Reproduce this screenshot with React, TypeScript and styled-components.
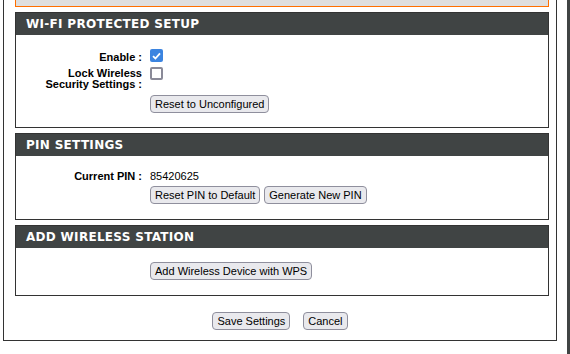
import React from "react";
import styled, { createGlobalStyle } from "styled-components";

const GlobalStyle = createGlobalStyle`
  html, body {
    margin: 0;
    padding: 0;
    background: #ffffff;
  }
  body {
    font-family: "Liberation Sans", Arial, sans-serif;
    font-size: 11px;
    color: #000000;
  }
`;

const Page = styled.div`
  display: flex;
  width: 570px;
  height: 354px;
  overflow: hidden;
`;

const Main = styled.div`
  margin-left: 3px;
  width: 554px;
  height: 341px;
  border: 1px solid #333333;
  border-top: none;
  padding: 0 9px 0 11px;
  box-sizing: border-box;
  display: flex;
  flex-direction: column;
  gap: 5px;
`;

const SideBar = styled.div`
  margin-left: auto;
  width: 3px;
  height: 100%;
  background: #404444;
`;

const Notice = styled.div`
  height: 7px;
  width: 534px;
  box-sizing: border-box;
  background: #dfdfdf;
  border: 1px solid #ff6f00;
  border-top: none;
`;

const Section = styled.div`
  width: 534px;
  box-sizing: border-box;
  border: 1px solid #333333;
`;

const SectionHeader = styled.h2`
  margin: 0;
  height: 22px;
  background: #404444;
  color: #ffffff;
  font-family: "DejaVu Sans", Verdana, sans-serif;
  font-weight: bold;
  font-size: 12px;
  letter-spacing: 0.3px;
  line-height: 22px;
  padding-left: 10px;
`;

const SectionBody = styled.div<{ $top: number; $bottom: number }>`
  padding: ${(p) => p.$top}px 0 ${(p) => p.$bottom}px;
  display: flex;
  flex-direction: column;
`;

const Row = styled.div<{ $gapTop?: number }>`
  display: grid;
  grid-template-columns: 126px 1fr;
  column-gap: 8px;
  align-items: start;
  margin-top: ${(p) => p.$gapTop ?? 0}px;
`;

const Label = styled.div<{ $lines?: boolean }>`
  text-align: right;
  font-weight: bold;
  font-size: 11px;
  line-height: ${(p) => (p.$lines ? "11px" : "18px")};
  padding-top: ${(p) => (p.$lines ? "2px" : "0")};
`;

const Value = styled.div`
  line-height: 18px;
  font-size: 11px;
`;

const Controls = styled.div`
  display: flex;
  gap: 4px;
  align-items: center;
`;

const Button = styled.button`
  height: 18px;
  padding: 0 4px;
  margin: 0;
  font-family: "Liberation Sans", Arial, sans-serif;
  font-size: 11px;
  color: #000000;
  background: #e9e9ed;
  border: 1px solid #8f8f9d;
  border-radius: 4px;
  line-height: 16px;
  white-space: nowrap;
`;

const BoxWrap = styled.span<{ $checked: boolean }>`
  display: inline-flex;
  align-items: center;
  justify-content: center;
  width: 13px;
  height: 13px;
  margin-top: 1px;
  box-sizing: border-box;
  border-radius: 2px;
  background: ${(p) => (p.$checked ? "#3b84e0" : "#ffffff")};
  border: ${(p) => (p.$checked ? "none" : "2px solid #8a8a98")};
`;

const Footer = styled.div`
  display: flex;
  justify-content: center;
  gap: 13px;
  margin-top: 11px;
  padding-right: 2px;
`;

const Checkbox: React.FC<{ checked?: boolean }> = ({ checked = false }) => (
  <BoxWrap $checked={checked} role="checkbox" aria-checked={checked}>
    {checked && (
      <svg width="9" height="8" viewBox="0 0 9 8">
        <path d="M1 4.2 L3.4 6.5 L8 1.3" fill="none" stroke="#ffffff" strokeWidth="1.8" />
      </svg>
    )}
  </BoxWrap>
);

export default function App() {
  return (
    <>
      <GlobalStyle />
      <Page>
        <Main>
          <Notice />
          <Section>
            <SectionHeader>WI-FI PROTECTED SETUP</SectionHeader>
            <SectionBody $top={13} $bottom={14}>
              <Row>
                <Label>Enable :</Label>
                <Checkbox checked />
              </Row>
              <Row>
                <Label $lines>
                  Lock Wireless
                  <br />
                  Security Settings :
                </Label>
                <Checkbox />
              </Row>
              <Row $gapTop={5}>
                <span />
                <Controls>
                  <Button>Reset to Unconfigured</Button>
                </Controls>
              </Row>
            </SectionBody>
          </Section>
          <Section>
            <SectionHeader>PIN SETTINGS</SectionHeader>
            <SectionBody $top={11} $bottom={15}>
              <Row>
                <Label>Current PIN :</Label>
                <Value>85420625</Value>
              </Row>
              <Row $gapTop={1}>
                <span />
                <Controls>
                  <Button>Reset PIN to Default</Button>
                  <Button>Generate New PIN</Button>
                </Controls>
              </Row>
            </SectionBody>
          </Section>
          <Section>
            <SectionHeader>ADD WIRELESS STATION</SectionHeader>
            <SectionBody $top={14} $bottom={15}>
              <Row>
                <span />
                <Controls>
                  <Button>Add Wireless Device with WPS</Button>
                </Controls>
              </Row>
            </SectionBody>
          </Section>
          <Footer>
            <Button>Save Settings</Button>
            <Button>Cancel</Button>
          </Footer>
        </Main>
        <SideBar />
      </Page>
    </>
  );
}
